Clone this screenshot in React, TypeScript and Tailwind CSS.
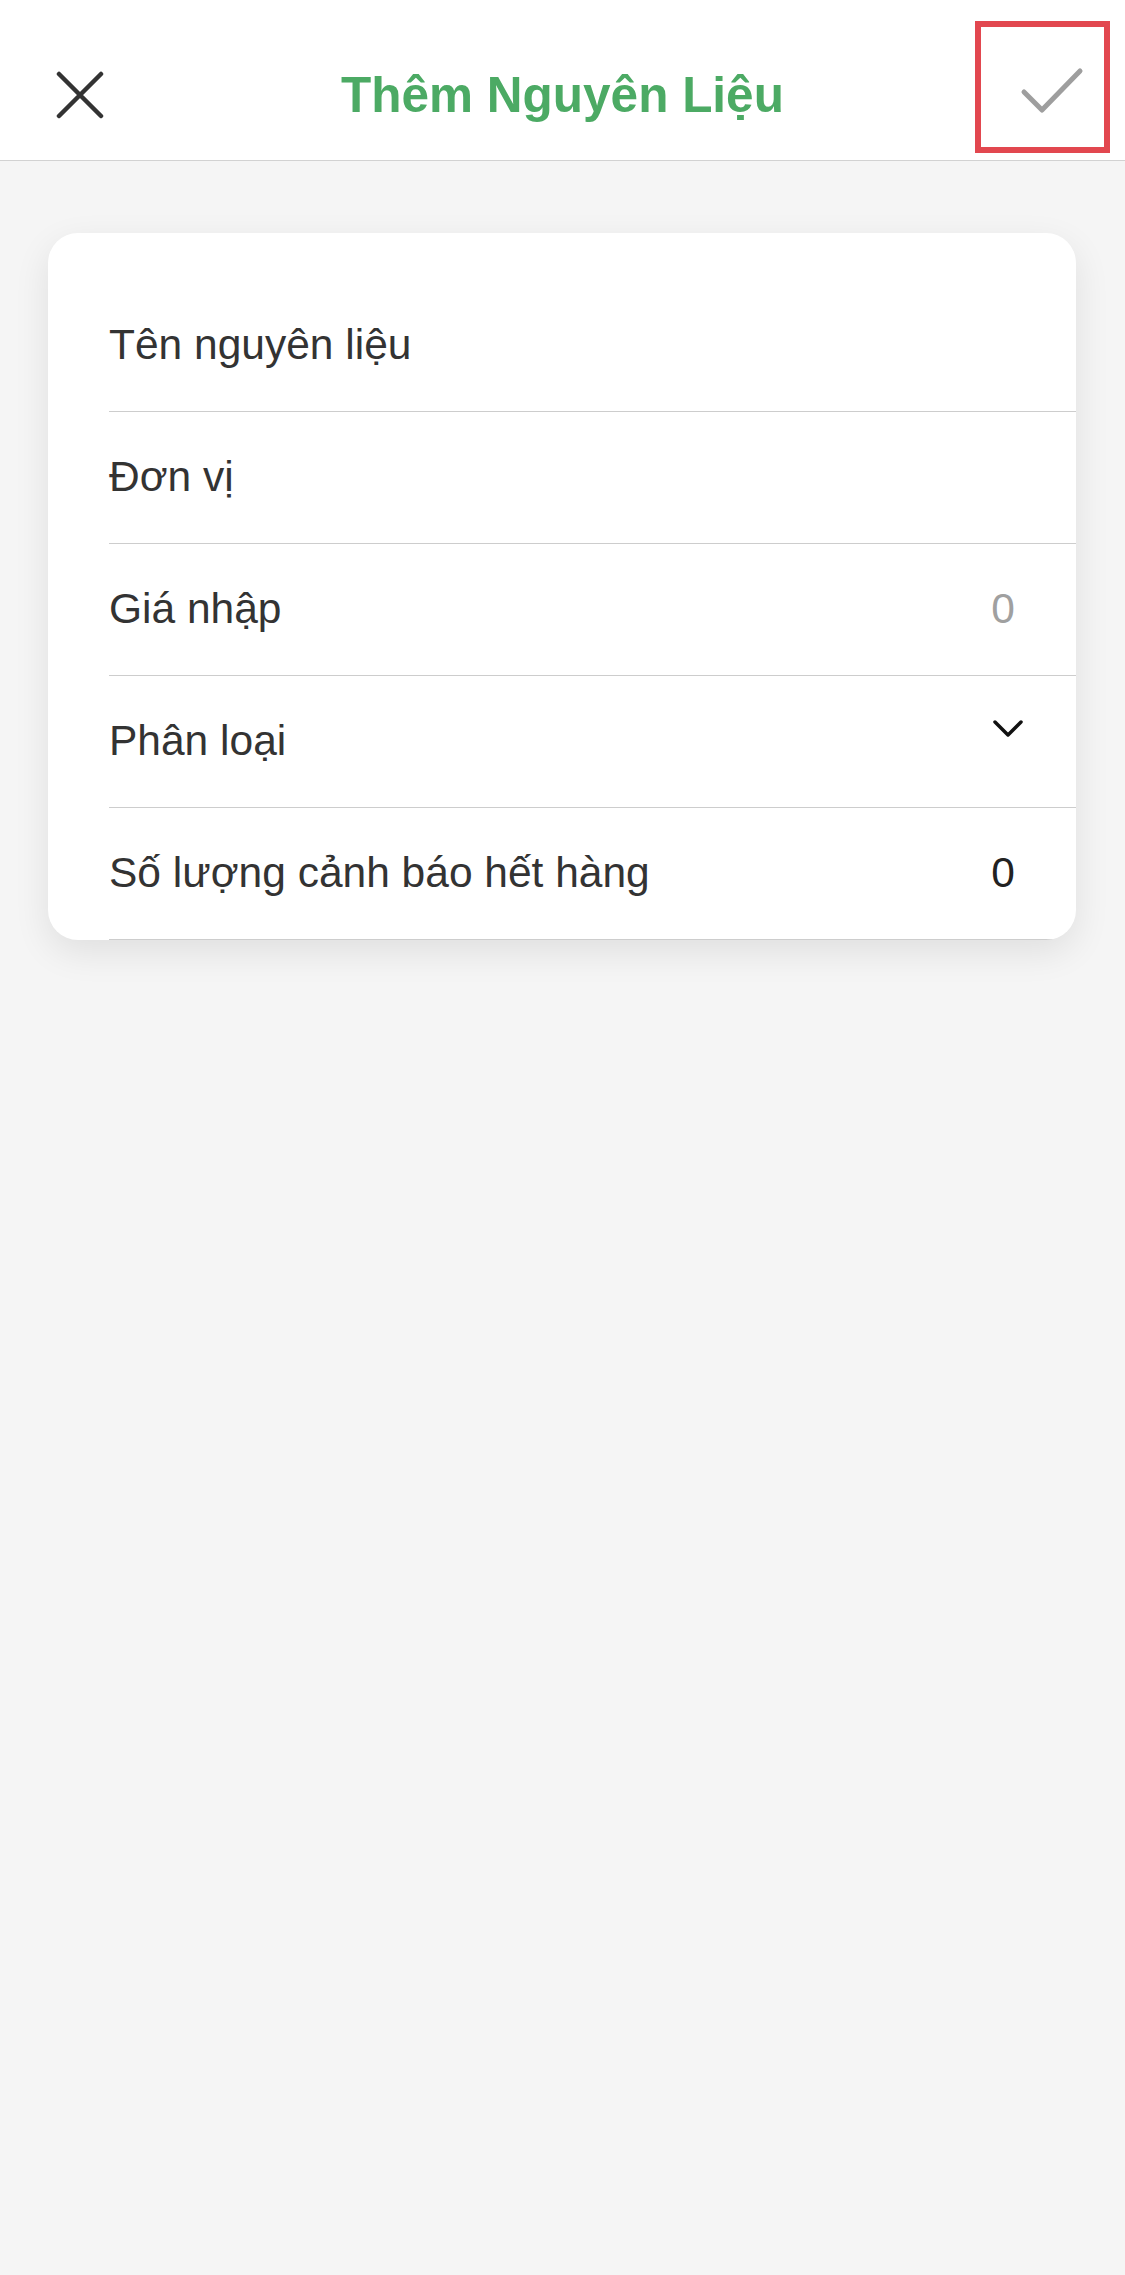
import React from 'react';

type Row = {
  label: string;
  value?: string;
  placeholder?: boolean;
  select?: boolean;
};

const rows: Row[] = [
  { label: 'Tên nguyên liệu' },
  { label: 'Đơn vị' },
  { label: 'Giá nhập', value: '0', placeholder: true },
  { label: 'Phân loại', select: true },
  { label: 'Số lượng cảnh báo hết hàng', value: '0' },
];

const CloseIcon = () => (
  <svg width="50" height="48" viewBox="0 0 50 48" fill="none">
    <path d="M4 3 L46 45 M46 3 L4 45" stroke="#333333" strokeWidth="4.5" strokeLinecap="round" />
  </svg>
);

const CheckIcon = () => (
  <svg width="123" height="120" viewBox="0 0 123 120" fill="none">
    <path d="M43 65 L61 83 L99 44" stroke="#9e9e9e" strokeWidth="5" strokeLinecap="round" strokeLinejoin="round" />
  </svg>
);

const ChevronIcon = () => (
  <svg width="32" height="20" viewBox="0 0 32 20" fill="none">
    <path d="M3 3 L16 16 L29 3" stroke="#111111" strokeWidth="3.5" strokeLinecap="round" strokeLinejoin="round" />
  </svg>
);

const App: React.FC = () => {
  return (
    <div className="min-h-[2275px] bg-[#f5f5f5] font-['Liberation_Sans',Arial,sans-serif] text-[#333333]">
      <header className="h-[161px] bg-white border-b border-[#d2d2d2] grid grid-cols-[1fr_auto_1fr] items-center">
        <div className="flex items-center mt-[30px]">
          <button className="ml-[55px] flex items-center justify-center">
            <CloseIcon />
          </button>
        </div>
        <h1 className="mt-[30px] text-[49.5px] font-bold text-[#4caa64] leading-none">Thêm Nguyên Liệu</h1>
        <div className="flex justify-end mt-[14px]">
          <button className="mr-[15px] w-[135px] h-[132px] border-[6px] border-[#e2474f] flex items-center justify-center">
            <CheckIcon />
          </button>
        </div>
      </header>

      <div className="mt-[72px] ml-[48px] mr-[49px] bg-white rounded-[30px] overflow-hidden pt-[47px] shadow-[0_12px_36px_rgba(0,0,0,0.09)]">
        {rows.map((row) => (
          <div
            key={row.label}
            className="ml-[61px] h-[132px] border-b border-[#cdcdcd] pr-[61px] flex items-center justify-between"
          >
            <span className="text-[42.5px] leading-none">{row.label}</span>
            {row.value && (
              <span className={`text-[42.5px] leading-none ${row.placeholder ? 'text-[#a0a0a0]' : 'text-[#222222]'}`}>
                {row.value}
              </span>
            )}
            {row.select && (
              <span className="self-start mt-[43px] -mr-[9px]">
                <ChevronIcon />
              </span>
            )}
          </div>
        ))}
      </div>
    </div>
  );
};

export default App;
